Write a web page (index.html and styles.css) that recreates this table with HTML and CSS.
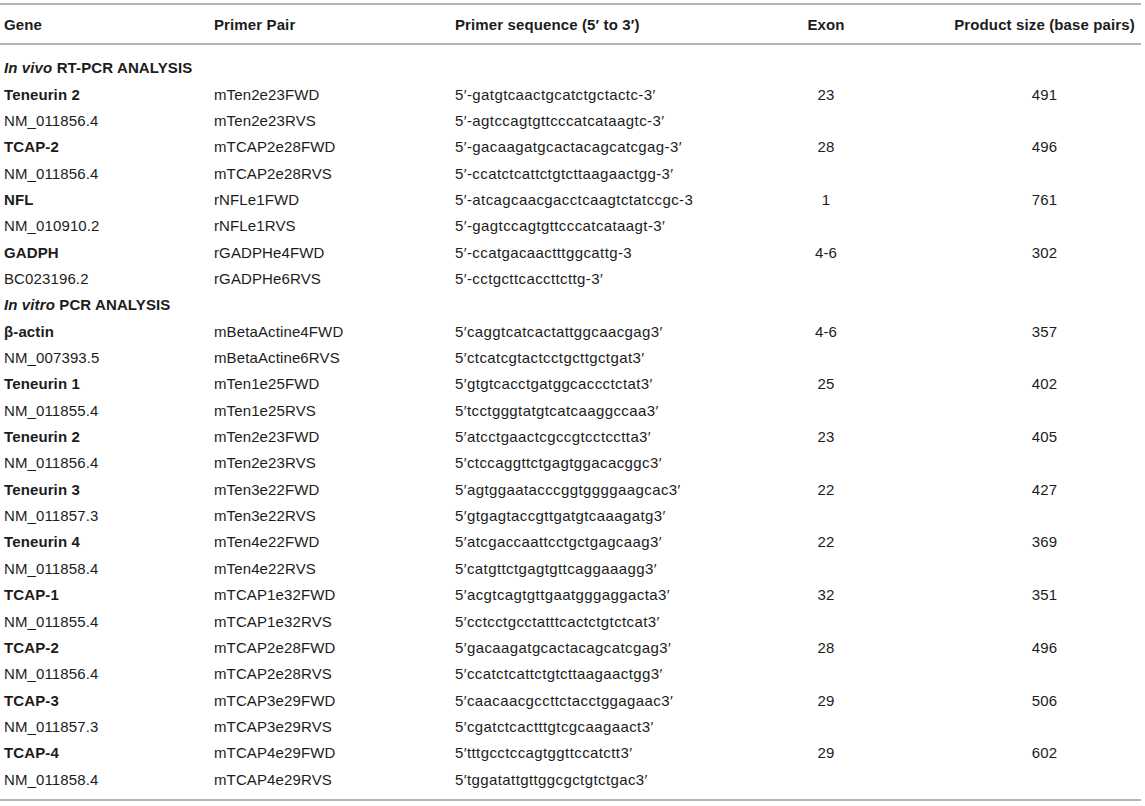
FILE: index.html
```html
<!DOCTYPE html>
<html lang="en">
<head>
<meta charset="utf-8">
<title>Primer table</title>
<link rel="stylesheet" href="styles.css">
</head>
<body>
<table class="primers">
  <colgroup>
    <col class="c-gene">
    <col class="c-pair">
    <col class="c-seq">
    <col class="c-exon">
    <col class="c-size">
  </colgroup>
  <thead>
    <tr>
      <th class="left">Gene</th>
      <th class="left">Primer Pair</th>
      <th class="left seq">Primer sequence (5′ to 3′)</th>
      <th class="exon">Exon</th>
      <th class="size">Product size (base pairs)</th>
    </tr>
  </thead>
  <tbody>
    <tr class="section first"><td colspan="5"><i>In vivo</i> RT-PCR ANALYSIS</td></tr>
    <tr><td class="gene">Teneurin 2</td><td>mTen2e23FWD</td><td class="seq">5′-gatgtcaactgcatctgctactc-3′</td><td class="exon">23</td><td class="size">491</td></tr>
    <tr><td>NM_011856.4</td><td>mTen2e23RVS</td><td class="seq">5′-agtccagtgttcccatcataagtc-3′</td><td class="exon"></td><td class="size"></td></tr>
    <tr><td class="gene">TCAP-2</td><td>mTCAP2e28FWD</td><td class="seq">5′-gacaagatgcactacagcatcgag-3′</td><td class="exon">28</td><td class="size">496</td></tr>
    <tr><td>NM_011856.4</td><td>mTCAP2e28RVS</td><td class="seq">5′-ccatctcattctgtcttaagaactgg-3′</td><td class="exon"></td><td class="size"></td></tr>
    <tr><td class="gene">NFL</td><td>rNFLe1FWD</td><td class="seq">5′-atcagcaacgacctcaagtctatccgc-3</td><td class="exon">1</td><td class="size">761</td></tr>
    <tr><td>NM_010910.2</td><td>rNFLe1RVS</td><td class="seq">5′-gagtccagtgttcccatcataagt-3′</td><td class="exon"></td><td class="size"></td></tr>
    <tr><td class="gene">GADPH</td><td>rGADPHe4FWD</td><td class="seq">5′-ccatgacaactttggcattg-3</td><td class="exon">4-6</td><td class="size">302</td></tr>
    <tr><td>BC023196.2</td><td>rGADPHe6RVS</td><td class="seq">5′-cctgcttcaccttcttg-3′</td><td class="exon"></td><td class="size"></td></tr>
    <tr class="section"><td colspan="5"><i>In vitro</i> PCR ANALYSIS</td></tr>
    <tr><td class="gene">β-actin</td><td>mBetaActine4FWD</td><td class="seq">5′caggtcatcactattggcaacgag3′</td><td class="exon">4-6</td><td class="size">357</td></tr>
    <tr><td>NM_007393.5</td><td>mBetaActine6RVS</td><td class="seq">5′ctcatcgtactcctgcttgctgat3′</td><td class="exon"></td><td class="size"></td></tr>
    <tr><td class="gene">Teneurin 1</td><td>mTen1e25FWD</td><td class="seq">5′gtgtcacctgatggcaccctctat3′</td><td class="exon">25</td><td class="size">402</td></tr>
    <tr><td>NM_011855.4</td><td>mTen1e25RVS</td><td class="seq">5′tcctgggtatgtcatcaaggccaa3′</td><td class="exon"></td><td class="size"></td></tr>
    <tr><td class="gene">Teneurin 2</td><td>mTen2e23FWD</td><td class="seq">5′atcctgaactcgccgtcctcctta3′</td><td class="exon">23</td><td class="size">405</td></tr>
    <tr><td>NM_011856.4</td><td>mTen2e23RVS</td><td class="seq">5′ctccaggttctgagtggacacggc3′</td><td class="exon"></td><td class="size"></td></tr>
    <tr><td class="gene">Teneurin 3</td><td>mTen3e22FWD</td><td class="seq">5′agtggaatacccggtggggaagcac3′</td><td class="exon">22</td><td class="size">427</td></tr>
    <tr><td>NM_011857.3</td><td>mTen3e22RVS</td><td class="seq">5′gtgagtaccgttgatgtcaaagatg3′</td><td class="exon"></td><td class="size"></td></tr>
    <tr><td class="gene">Teneurin 4</td><td>mTen4e22FWD</td><td class="seq">5′atcgaccaattcctgctgagcaag3′</td><td class="exon">22</td><td class="size">369</td></tr>
    <tr><td>NM_011858.4</td><td>mTen4e22RVS</td><td class="seq">5′catgttctgagtgttcaggaaagg3′</td><td class="exon"></td><td class="size"></td></tr>
    <tr><td class="gene">TCAP-1</td><td>mTCAP1e32FWD</td><td class="seq">5′acgtcagtgttgaatgggaggacta3′</td><td class="exon">32</td><td class="size">351</td></tr>
    <tr><td>NM_011855.4</td><td>mTCAP1e32RVS</td><td class="seq">5′cctcctgcctatttcactctgtctcat3′</td><td class="exon"></td><td class="size"></td></tr>
    <tr><td class="gene">TCAP-2</td><td>mTCAP2e28FWD</td><td class="seq">5′gacaagatgcactacagcatcgag3′</td><td class="exon">28</td><td class="size">496</td></tr>
    <tr><td>NM_011856.4</td><td>mTCAP2e28RVS</td><td class="seq">5′ccatctcattctgtcttaagaactgg3′</td><td class="exon"></td><td class="size"></td></tr>
    <tr><td class="gene">TCAP-3</td><td>mTCAP3e29FWD</td><td class="seq">5′caacaacgccttctacctggagaac3′</td><td class="exon">29</td><td class="size">506</td></tr>
    <tr><td>NM_011857.3</td><td>mTCAP3e29RVS</td><td class="seq">5′cgatctcactttgtcgcaagaact3′</td><td class="exon"></td><td class="size"></td></tr>
    <tr><td class="gene">TCAP-4</td><td>mTCAP4e29FWD</td><td class="seq">5′tttgcctccagtggttccatctt3′</td><td class="exon">29</td><td class="size">602</td></tr>
    <tr class="last"><td>NM_011858.4</td><td>mTCAP4e29RVS</td><td class="seq">5′tggatattgttggcgctgtctgac3′</td><td class="exon"></td><td class="size"></td></tr>
  </tbody>
</table>
</body>
</html>
```

FILE: styles.css
```css
html, body {
  margin: 0;
  padding: 0;
  background: #ffffff;
}

body {
  padding-top: 3px;
  font-family: "Liberation Sans", Arial, Helvetica, sans-serif;
  font-size: 15px;
  letter-spacing: 0.12px;
  color: #1c1c1c;
}

.primers {
  width: 1141px;
  table-layout: fixed;
  border-collapse: collapse;
  border-top: 2px solid #b4b4b4;
  border-bottom: 2px solid #b4b4b4;
}

.c-gene { width: 210px; }
.c-pair { width: 238px; }
.c-seq { width: 272px; }
.c-exon { width: 224px; }
.c-size { width: 197px; }

.primers th {
  font-weight: bold;
  height: 38px;
  padding: 0 4px;
  line-height: 17px;
  vertical-align: middle;
  border-bottom: 2px solid #b4b4b4;
}

.primers th.left { text-align: left; }

.primers td {
  padding: 4.675px 4px;
  line-height: 17px;
  white-space: nowrap;
  vertical-align: middle;
}

.primers .seq {
  padding-left: 7px;
}

.primers td.seq {
  letter-spacing: 0.4px;
}

.primers .exon {
  text-align: center;
  padding-right: 16px;
}

.primers .size {
  text-align: center;
  padding-left: 8px;
}

.primers td.gene { font-weight: bold; }

.primers tr.section td {
  font-weight: bold;
}

.primers tr.first td {
  padding-top: 14.3px;
}

.primers tr.last td {
  padding-bottom: 11.7px;
}
```
